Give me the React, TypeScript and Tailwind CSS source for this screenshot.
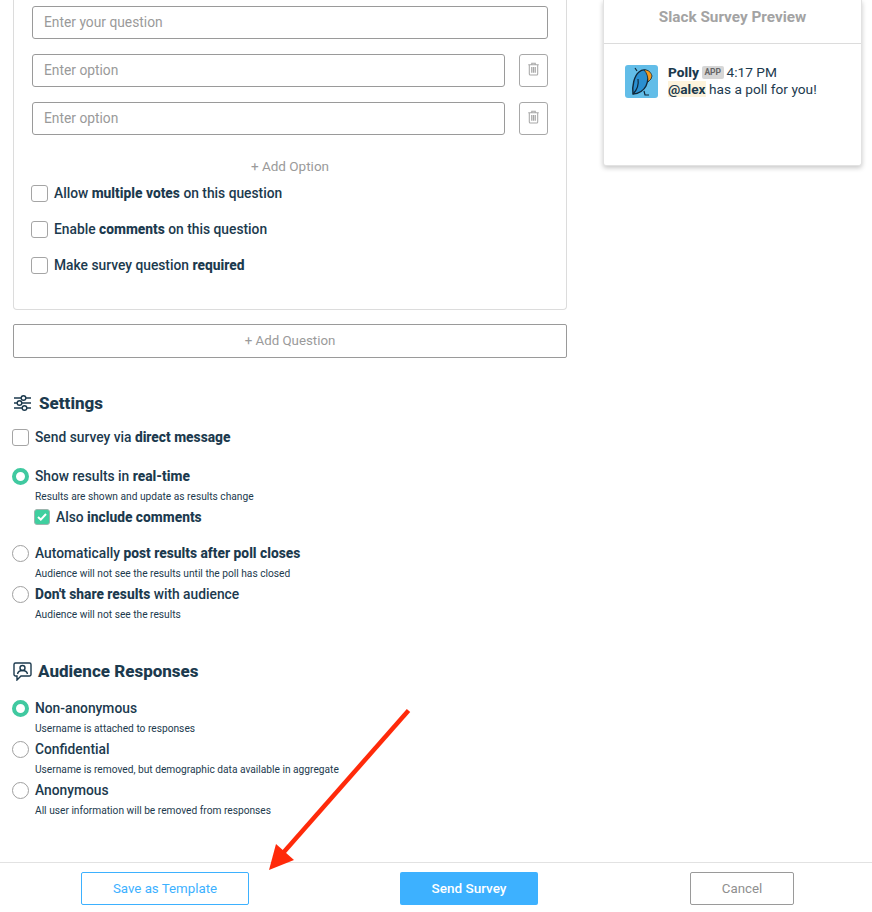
import React from "react";

const ink = "text-[#1c3a4e]";

function Trash() {
  return (
    <svg width="13" height="14" viewBox="0 0 14 16" fill="none" stroke="#a8a8a8" strokeWidth="1.200">
      <path d="M1 3.200h12M5 3V1.500h4V3" />
      <path d="M2.200 3.400v10.200c0 .8.500 1.300 1.200 1.300h7.200c.7 0 1.200-.5 1.200-1.300V3.400" />
      <path d="M5 5.800v6.600M7 5.800v6.600M9 5.800v6.600" strokeWidth="1.400" />
    </svg>
  );
}

function Field({ text, w }: { text: string; w: string }) {
  return (
    <div className={`${w} h-[33px] border border-[#9a9a9a] rounded-[3px] pl-[11px] pb-[1px] flex items-center text-[13.800px] text-[#9a9a9a]`}>
      {text}
    </div>
  );
}

function OptionRow() {
  return (
    <div className="flex gap-[14px] mt-[15px]">
      <Field text="Enter option" w="w-[473px]" />
      <div className="w-[29px] h-[33px] border border-[#a8a8a8] rounded-[3px] flex items-center justify-center pb-[4px]">
        <Trash />
      </div>
    </div>
  );
}

function Box({ on = false }: { on?: boolean }) {
  return on ? (
    <span className="w-[16px] h-[16px] rounded-[3px] bg-[#3fcf9f] border border-[#9db5ae] flex items-center justify-center shrink-0">
      <svg width="10" height="8" viewBox="0 0 10 8" fill="none" stroke="#fff" strokeWidth="2">
        <path d="M1 4l2.800 2.600L9 1" />
      </svg>
    </span>
  ) : (
    <span className="w-[17px] h-[17px] rounded-[3px] bg-white border border-[#a5a5a5] shrink-0" />
  );
}

function Radio({ on = false }: { on?: boolean }) {
  return on ? (
    <span className="w-[17px] h-[17px] rounded-full bg-white border-[4px] border-[#40c9a0] shrink-0" />
  ) : (
    <span className="w-[17px] h-[17px] rounded-full bg-white border border-[#a0a0a0] shrink-0" />
  );
}

function Check({ children }: { children: React.ReactNode }) {
  return (
    <div className="-ml-[1px] flex items-center gap-[6px] h-[18px]">
      <Box />
      <span className={`text-[13.800px] font-medium leading-[18px] ${ink}`}>{children}</span>
    </div>
  );
}

function RadioRow({ on, label, hint, className = "" }: { on?: boolean; label: React.ReactNode; hint: string; className?: string }) {
  return (
    <div className={className}>
      <div className="-ml-[1px] flex items-center gap-[6px] h-[18px]">
        <Radio on={on} />
        <span className={`text-[13.800px] font-medium leading-[18px] ${ink}`}>{label}</span>
      </div>
      <div className={`ml-[22px] mt-[5px] text-[10.200px] leading-[14px] ${ink}`}>{hint}</div>
    </div>
  );
}

const B = ({ children }: { children: React.ReactNode }) => <b className="font-extrabold">{children}</b>;

export default function App() {
  return (
    <div
      className="relative w-[872px] h-[912px] overflow-hidden bg-white flex flex-col"
      style={{ fontFamily: 'Roboto, sans-serif' }}
    >
      <main className="h-[862px] pl-[13px] flex">
        <section className="w-[554px]">
          <div className="h-[310px] border border-t-0 border-[#dcdcdc] rounded-b-[4px] pl-[18px] pt-[6px]">
            <Field text="Enter your question" w="w-[516px]" />
            <OptionRow />
            <OptionRow />
            <div className="mt-[22px] w-[516px] text-center text-[13.500px] leading-[18px] text-[#9a9a9a]">+ Add Option</div>
            <div className="mt-[9px] flex flex-col gap-[18px]">
              <Check>Allow <B>multiple votes</B> on this question</Check>
              <Check>Enable <B>comments</B> on this question</Check>
              <Check>Make survey question <B>required</B></Check>
            </div>
          </div>
          <div className="mt-[14px] h-[34px] border border-[#9a9a9a] rounded-[2px] flex items-center justify-center text-[13.300px] text-[#9a9a9a]">
            + Add Question
          </div>

          <div className="mt-[35px] flex items-center gap-[7px] h-[20px]">
            <svg width="19" height="18" viewBox="0 0 19 18" fill="none" stroke="#1c3a4e" strokeWidth="1.400">
              <path d="M1 4h7M13 4h5M1 9h3M9 9h9M1 14h8M14 14h4" />
              <circle cx="10.500" cy="4" r="2.300" />
              <circle cx="6.500" cy="9" r="2.300" />
              <circle cx="11.500" cy="14" r="2.300" />
            </svg>
            <h2 className={`text-[17px] font-extrabold leading-[20px] ${ink}`}>Settings</h2>
          </div>
          <div className="mt-[15px]">
            <div className="-ml-[1px] flex items-center gap-[6px] h-[18px]">
              <Box />
              <span className={`text-[13.800px] font-medium leading-[18px] ${ink}`}>Send survey via <B>direct message</B></span>
            </div>
          </div>
          <RadioRow className="mt-[21px]" on label={<>Show results in <B>real-time</B></>} hint="Results are shown and update as results change" />
          <div className="ml-[21px] mt-[4px] flex items-center gap-[6px] h-[18px]">
            <Box on />
            <span className={`text-[13.800px] font-medium leading-[18px] ${ink}`}>Also <B>include comments</B></span>
          </div>
          <RadioRow className="mt-[18px]" label={<>Automatically <B>post results after poll closes</B></>} hint="Audience will not see the results until the poll has closed" />
          <RadioRow className="mt-[4px]" label={<><B>Don't share results</B> with audience</>} hint="Audience will not see the results" />

          <div className="mt-[38px] flex items-center gap-[6px] h-[22px]">
            <svg width="19" height="19" viewBox="0 0 19 19" fill="none" stroke="#1c3a4e" strokeWidth="1.400">
              <path d="M2.500 1h14a1.500 1.500 0 0 1 1.500 1.500v10a1.500 1.500 0 0 1-1.500 1.500H8l-4 4v-4H2.500A1.500 1.500 0 0 1 1 12.500v-10A1.500 1.500 0 0 1 2.500 1z" />
              <circle cx="9.500" cy="6" r="2.500" />
              <path d="M4.500 12c.5-2.500 2.500-3.500 5-3.500s4.500 1 5 3.500" />
            </svg>
            <h2 className={`text-[17px] font-extrabold leading-[22px] ${ink}`}>Audience Responses</h2>
          </div>
          <RadioRow className="mt-[17px]" on label="Non-anonymous" hint="Username is attached to responses" />
          <RadioRow className="mt-[4px]" label="Confidential" hint="Username is removed, but demographic data available in aggregate" />
          <RadioRow className="mt-[4px]" label="Anonymous" hint="All user information will be removed from responses" />
        </section>

        <aside className="ml-[36px] w-[259px] h-[166px] bg-white rounded-b-[3px] border border-t-0 border-[#e2e2e2] shadow-[0_2px_5px_rgba(0,0,0,0.22)]">
          <div className="h-[44px] border-b border-[#dcdcdc] flex items-center justify-center pb-[13px] pt-[4px] text-[15.300px] font-bold text-[#a3a3a3]">
            Slack Survey Preview
          </div>
          <div className="flex pl-[21px] pt-[21px] gap-[10px]">
            <div className="w-[33px] h-[33px] rounded-[3px] bg-[#62bde8] flex items-center justify-center shrink-0">
              <svg width="26" height="30" viewBox="0 0 26 30" fill="none">
                <path d="M4 27C3 19 5 9 10 5c3-2.500 6-2.500 8-1 1.500 3 1.500 10-1 15-2 4-7 8-13 8z" fill="#2a8fd0" stroke="#10283a" strokeWidth="1.400" />
                <path d="M15 3c4-.5 7 2 8 6l-1 3-3 3c0-5-1-9-4-12z" fill="#f39a1e" stroke="#10283a" strokeWidth="0.800" />
                <path d="M4 27c4-4 6-9 5-15" stroke="#10283a" strokeWidth="1.200" />
                <path d="M15 24l1 4h4M6 1l2 3" stroke="#10283a" strokeWidth="1.200" />
              </svg>
            </div>
            <div className={`text-[13.700px] leading-[17px] -mt-[1px] ${ink}`}>
              <div className="flex items-center">
                <B>Polly</B>
                <span className="ml-[3px] mr-[3px] h-[13px] px-[2.500px] bg-[#d6d6d6] rounded-[2px] text-[8.500px] font-bold leading-[13px] text-[#666666]">APP</span>
                <span>4:17 PM</span>
              </div>
              <div>
                <span className="bg-[#fdf3dc] font-bold">@alex</span> has a poll for you!
              </div>
            </div>
          </div>
        </aside>
      </main>

      <footer className="h-[50px] border-t border-[#e2e2e2] relative pt-[9px] pl-[81px] flex">
        <button className="w-[168px] h-[33px] border border-[#3db1ff] rounded-[2px] text-[13.300px] text-[#3db1ff]">Save as Template</button>
        <button className="ml-[151px] w-[138px] h-[33px] bg-[#3db1ff] rounded-[2px] text-[13.500px] font-medium text-white">Send Survey</button>
        <button className="ml-[152px] w-[104px] h-[33px] border border-[#9a9a9a] rounded-[2px] text-[13.300px] text-[#8f8f8f]">Cancel</button>
      </footer>

      <svg className="absolute left-0 top-0 pointer-events-none" width="872" height="912" viewBox="0 0 872 912" fill="none">
        <path d="M408.500 710.500L283 853" stroke="#ff2a0a" strokeWidth="4.500" />
        <path d="M269 870L276 844L294 860Z" fill="#ff2a0a" />
      </svg>
    </div>
  );
}
